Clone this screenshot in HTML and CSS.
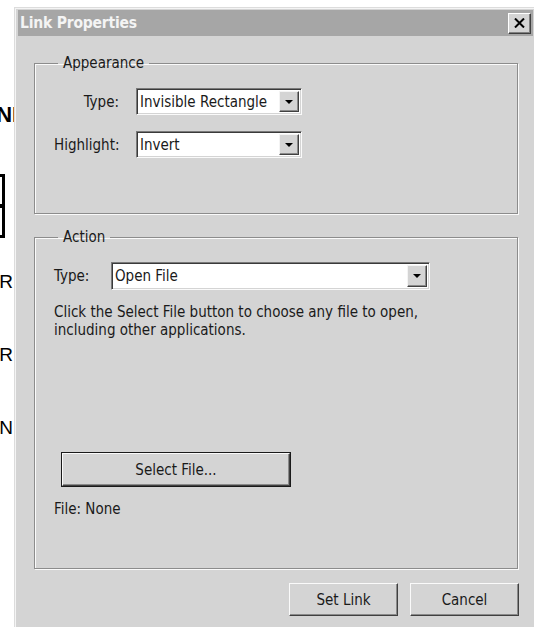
FILE: index.html
```html
<!DOCTYPE html>
<html lang="en">
<head>
<meta charset="utf-8">
<title>Link Properties</title>
<link rel="stylesheet" href="styles.css">
</head>
<body>
  <!-- document page underneath the dialog -->
  <div class="page">
    <div class="frag frag-head"><span>ANN</span></div>
    <div class="frag frag-table"><div class="doc-table"><div class="doc-row"></div><div class="doc-row"></div></div></div>
    <div class="frag frag-line"><span>R</span></div>
    <div class="frag frag-line"><span>R</span></div>
    <div class="frag frag-line"><span>N</span></div>
  </div>

  <div class="dialog">
    <div class="titlebar">
      <span class="title">Link Properties</span>
      <button class="close" type="button" aria-label="Close">
        <svg width="11" height="10" viewBox="0 0 11 10"><path d="M1 0.5 L10 9.5 M10 0.5 L1 9.5" stroke="#000" stroke-width="2"/></svg>
      </button>
    </div>

    <div class="content">
      <fieldset class="group group-appearance">
        <legend>Appearance</legend>
        <div class="form-grid">
          <span class="label">Type:</span>
          <div class="combo"><span class="combo-value">Invisible Rectangle</span><span class="combo-btn"><i class="tri"></i></span></div>
          <span class="label">Highlight:</span>
          <div class="combo"><span class="combo-value">Invert</span><span class="combo-btn"><i class="tri"></i></span></div>
        </div>
      </fieldset>

      <fieldset class="group group-action">
        <legend>Action</legend>
        <div class="action-row">
          <span class="label action-label">Type:</span>
          <div class="combo combo-long"><span class="combo-value">Open File</span><span class="combo-btn"><i class="tri"></i></span></div>
        </div>
        <p class="desc">Click the Select File button to choose any file to open,<br>including other applications.</p>
        <button class="btn btn-default btn-select" type="button">Select File...</button>
        <p class="file">File: None</p>
      </fieldset>

      <div class="footer">
        <button class="btn btn-foot" type="button">Set Link</button>
        <button class="btn btn-foot" type="button">Cancel</button>
      </div>
    </div>
  </div>
</body>
</html>
```

FILE: styles.css
```css
html, body {
  margin: 0;
  padding: 0;
}

body {
  width: 534px;
  height: 627px;
  overflow: hidden;
  position: relative;
  background: #ffffff;
  font-family: "Liberation Sans", Arial, sans-serif;
  color: #000;
}

/* ---- page content behind the dialog ---- */
.page {
  width: 14px;
  display: flex;
  flex-direction: column;
}

.frag {
  display: flex;
  justify-content: flex-end;
  white-space: nowrap;
}

.frag-head {
  margin-top: 103px;
  font-weight: bold;
  font-size: 22px;
  line-height: 24px;
  margin-right: -14px;
}

.frag-table {
  margin-top: 47px;
  margin-right: 9px;
}

.doc-table {
  width: 60px;
  border: 3px solid #000;
  border-left: none;
}

.doc-row {
  height: 27px;
}

.doc-row + .doc-row {
  border-top: 4px solid #000;
}

.frag-line {
  font-size: 19px;
  line-height: 22px;
  margin-right: 1px;
}

.frag-table + .frag-line { margin-top: 33px; }
.frag-line + .frag-line { margin-top: 51px; }

/* ---- dialog window ---- */
.dialog {
  position: absolute;
  left: 14px;
  top: 7px;
  width: 522px;
  height: 640px;
  box-sizing: border-box;
  background: #d4d4d4;
  border: 1px solid #dcdcdc;
  box-shadow: inset 1px 1px 0 #f4f4f4;
  padding: 2px 2px 2px 3px;
  font-family: "DejaVu Sans Condensed", "DejaVu Sans", sans-serif;
  font-size: 15px;
  color: #1a1a1a;
}

.titlebar {
  height: 26px;
  background: #a6a6a6;
  display: flex;
  align-items: center;
  justify-content: space-between;
  padding-left: 2px;
}

.title {
  font-weight: bold;
  font-size: 15.5px;
  color: #f4f4f4;
  letter-spacing: -0.2px;
}

.close {
  width: 23px;
  height: 21px;
  padding: 0;
  background: #d4d4d4;
  border: 1px solid;
  border-color: #fff #404040 #404040 #fff;
  box-shadow: inset -1px -1px 0 #808080;
  display: flex;
  align-items: center;
  justify-content: center;
  margin-right: 2px;
}

.content {
  padding: 20px 0 0 16px;
  width: 484px;
}

/* etched group boxes */
.group {
  margin: 0;
  border: 1px solid #8c8c8c;
  box-shadow: 1px 1px 0 #fafafa, inset 1px 1px 0 #fafafa;
  padding: 18px 18px 0 19px;
  box-sizing: border-box;
  width: 484px;
}

.group legend {
  padding: 0 5px;
  margin-left: 4px;
  line-height: 14px;
}

.group-appearance {
  height: 158px;
}

.group-action {
  height: 339px;
  margin-top: 16px;
}

.form-grid {
  display: grid;
  grid-template-columns: 65px 166px;
  column-gap: 17px;
  row-gap: 16px;
  align-items: center;
}

.form-grid .label {
  text-align: right;
  white-space: nowrap;
}

/* drop-down fields */
.combo {
  height: 27px;
  box-sizing: border-box;
  background: #fff;
  border: 1px solid;
  border-color: #7a7a7a #fafafa #fafafa #7a7a7a;
  box-shadow: inset 1px 1px 0 #3a3a3a, inset -1px -1px 0 #d4d4d4;
  display: flex;
  align-items: stretch;
  padding: 2px;
}

.combo-value {
  flex: 1;
  padding-left: 1px;
  display: flex;
  align-items: center;
  white-space: nowrap;
  overflow: hidden;
}

.combo-btn {
  width: 20px;
  box-sizing: border-box;
  background: #d4d4d4;
  border: 1px solid;
  border-color: #f4f4f4 #404040 #404040 #f4f4f4;
  box-shadow: inset -1px -1px 0 #8a8a8a;
  display: flex;
  align-items: center;
  justify-content: center;
}

.tri {
  width: 0;
  height: 0;
  border-left: 4px solid transparent;
  border-right: 4px solid transparent;
  border-top: 4px solid #000;
}

.action-row {
  display: flex;
  align-items: center;
  gap: 17px;
}

.action-label {
  width: 40px;
}

.combo-long {
  width: 319px;
  height: 28px;
}

.desc {
  margin: 13px 0 0;
  line-height: 18px;
}

/* push buttons */
.btn {
  font-family: inherit;
  font-size: 15px;
  color: #1a1a1a;
  background: #d4d4d4;
  border: 1px solid;
  border-color: #fafafa #404040 #404040 #fafafa;
  box-shadow: inset -1px -1px 0 #8a8a8a;
  padding: 0;
}

.btn-default {
  outline: 1px solid #1a1a1a;
}

.btn-select {
  display: block;
  width: 228px;
  height: 33px;
  margin: 114px 0 0 8px;
}

.file {
  margin: 14px 0 0;
  line-height: 18px;
}

.footer {
  display: flex;
  justify-content: flex-end;
  gap: 12px;
  margin-top: 14px;
  margin-right: -1px;
}

.btn-foot {
  width: 109px;
  height: 33px;
}
```
